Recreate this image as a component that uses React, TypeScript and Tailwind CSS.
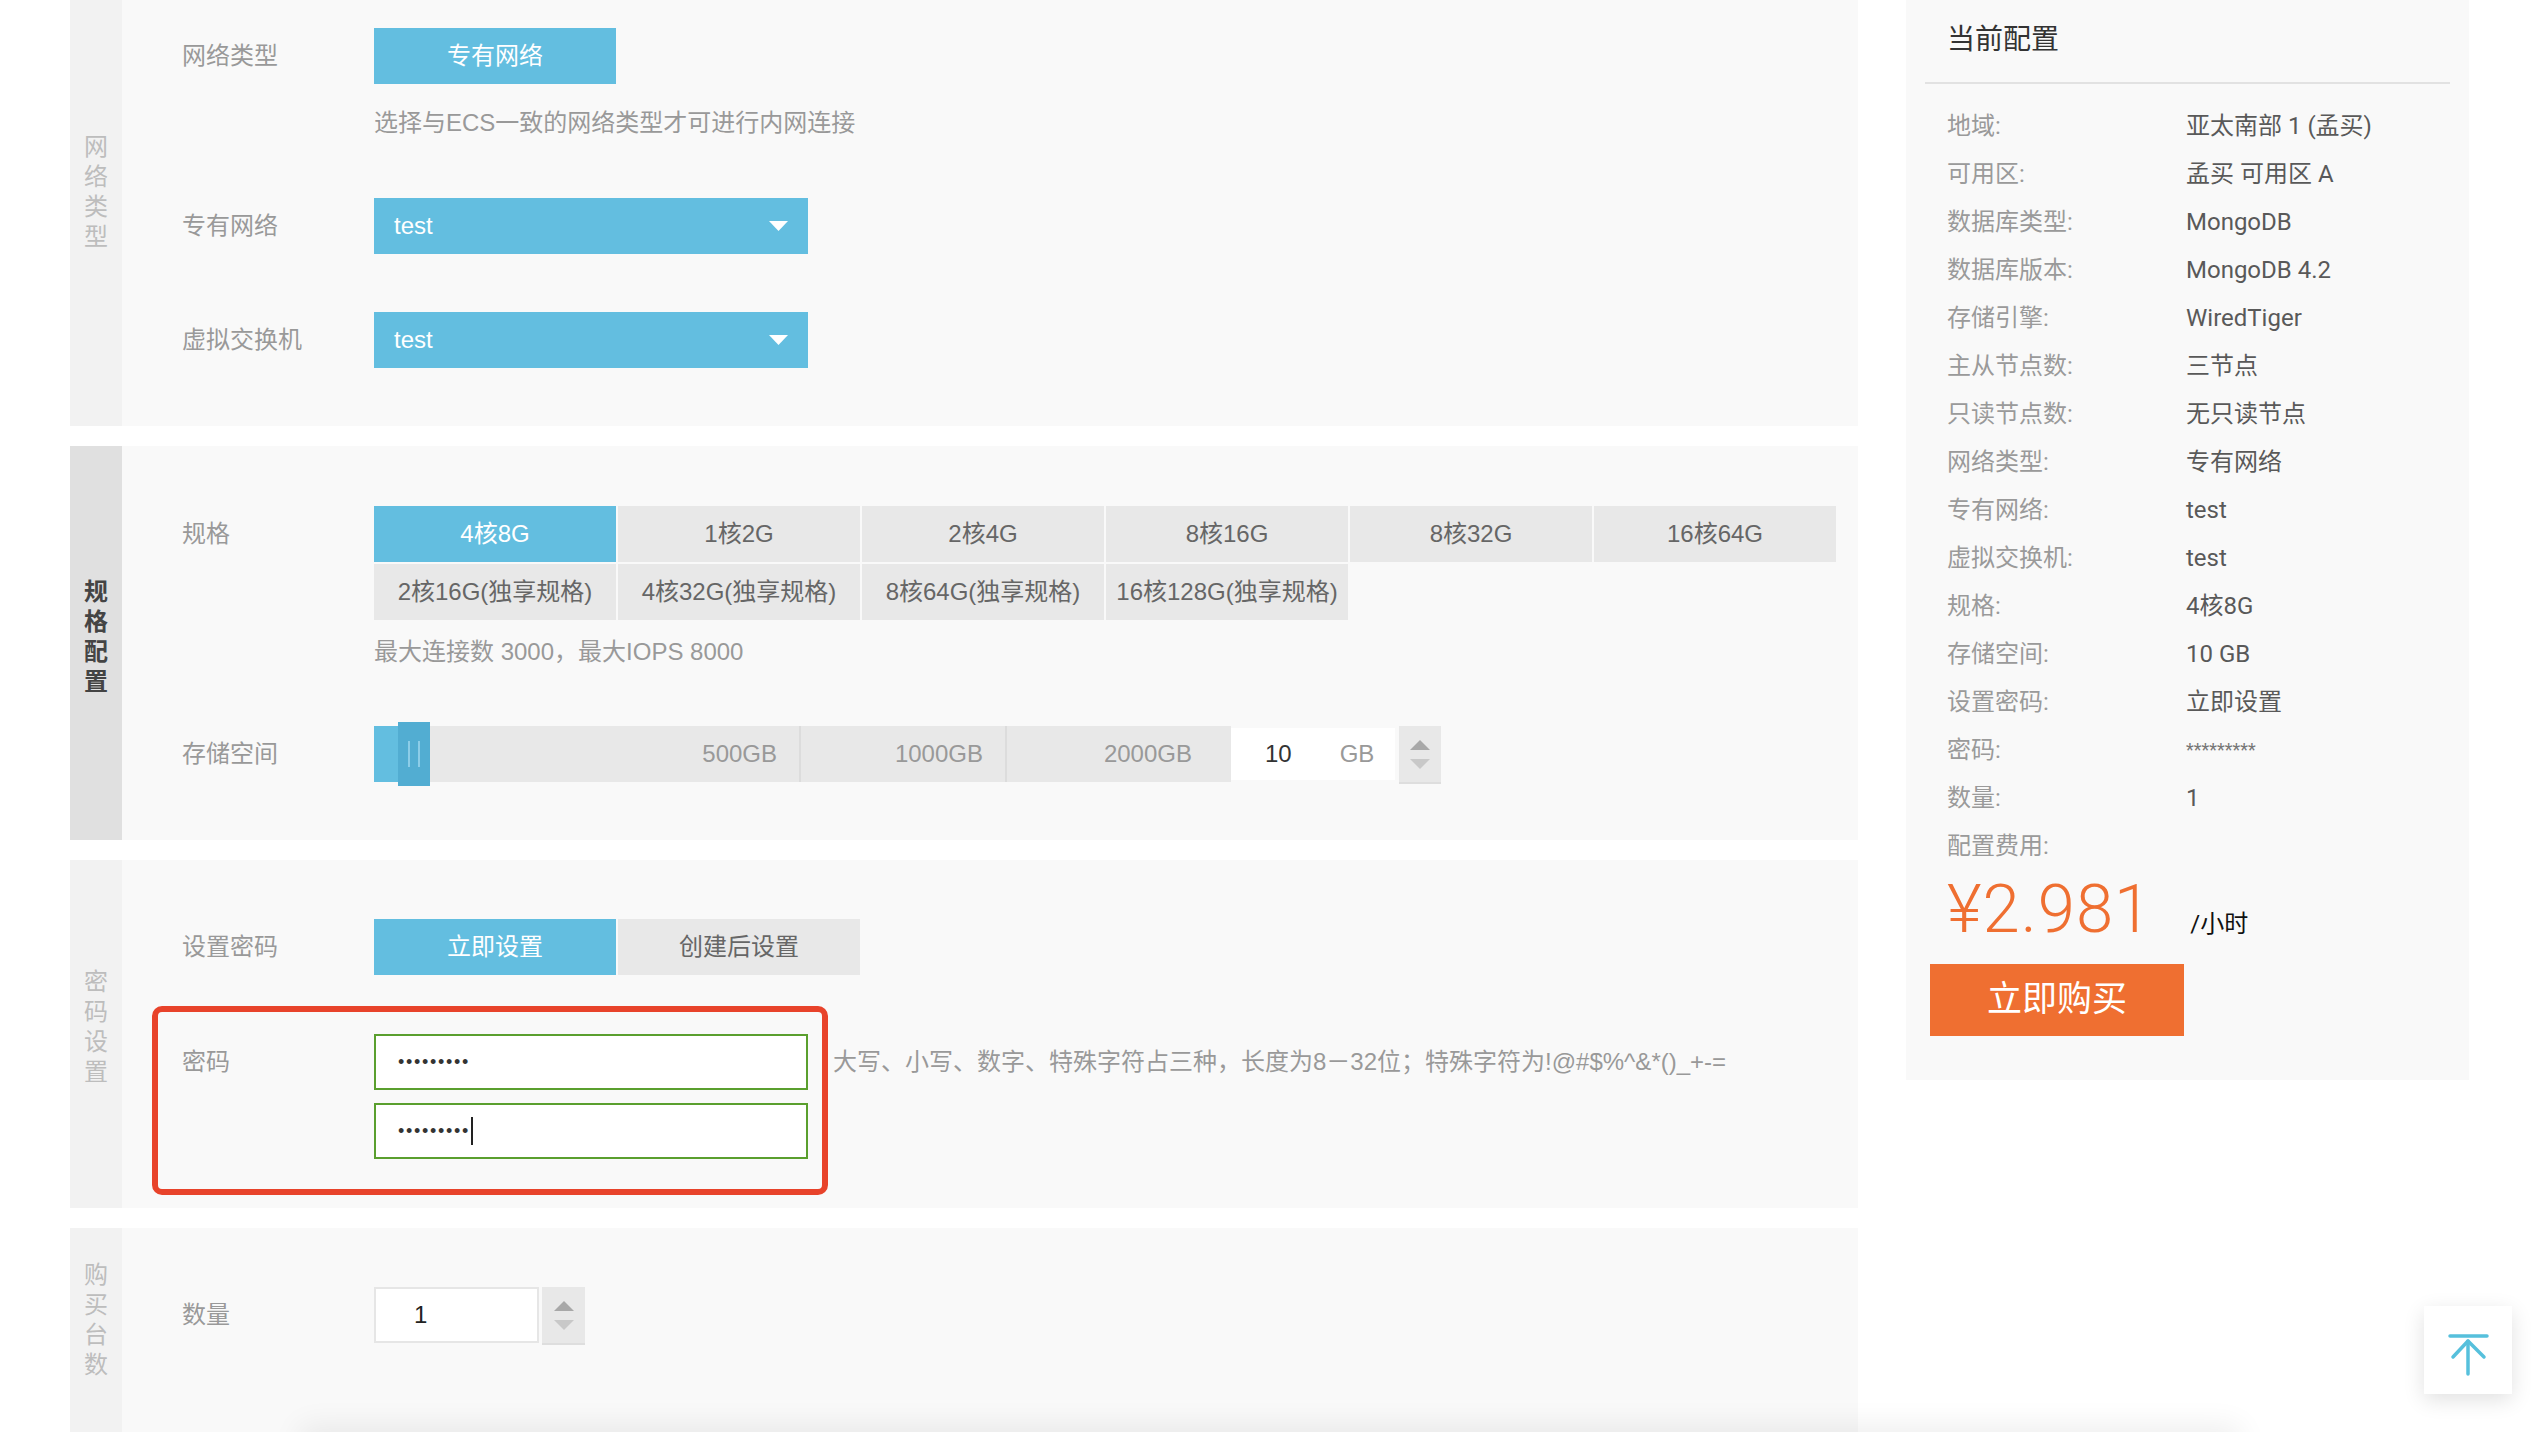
import React from "react";

const chars = (s: string) => s.split("");

function SideStrip({ text, active, cls }: { text: string; active?: boolean; cls: string }) {
  return (
    <div
      className={
        active
          ? `w-[52px] shrink-0 bg-[#e0e0e0] flex flex-col items-center text-[24px] leading-[30px] font-bold text-[#444] ${cls}`
          : `w-[52px] shrink-0 bg-[#f2f2f2] flex flex-col items-center text-[24px] leading-[30px] text-[#bdbdbd] ${cls}`
      }
    >
      {chars(text).map((c, i) => (
        <span key={i}>{c}</span>
      ))}
    </div>
  );
}

function Label({ children }: { children: React.ReactNode }) {
  return <div className="w-[192px] shrink-0 text-[24px] text-[#999]">{children}</div>;
}

function Select() {
  return (
    <div className="w-[434px] h-[56px] bg-[#63bee0] flex items-center justify-between pl-[20px] pr-[20px] text-white text-[24px]">
      <span>test</span>
      <svg width="19" height="10" viewBox="0 0 19 10">
        <path d="M0 0H19L9.5 10Z" fill="#ffffff" />
      </svg>
    </div>
  );
}

function Spinner({ cls }: { cls: string }) {
  return (
    <div className={`bg-[#e8e8e8] border-b-2 border-[#dedede] flex flex-col items-center justify-center gap-[9px] ${cls}`}>
      <svg width="20" height="10" viewBox="0 0 20 10">
        <path d="M10 0L20 10H0Z" fill="#a8a8a8" />
      </svg>
      <svg width="20" height="10" viewBox="0 0 20 10">
        <path d="M0 0H20L10 10Z" fill="#c8c8c8" />
      </svg>
    </div>
  );
}

const specs1 = ["4核8G", "1核2G", "2核4G", "8核16G", "8核32G", "16核64G"];
const specs2 = ["2核16G(独享规格)", "4核32G(独享规格)", "8核64G(独享规格)", "16核128G(独享规格)"];

const summary: [string, string][] = [
  ["地域:", "亚太南部 1 (孟买)"],
  ["可用区:", "孟买 可用区 A"],
  ["数据库类型:", "MongoDB"],
  ["数据库版本:", "MongoDB 4.2"],
  ["存储引擎:", "WiredTiger"],
  ["主从节点数:", "三节点"],
  ["只读节点数:", "无只读节点"],
  ["网络类型:", "专有网络"],
  ["专有网络:", "test"],
  ["虚拟交换机:", "test"],
  ["规格:", "4核8G"],
  ["存储空间:", "10 GB"],
  ["设置密码:", "立即设置"],
  ["密码:", ""],
  ["数量:", "1"],
  ["配置费用:", ""],
];

export default function App() {
  return (
    <div className="relative w-[2540px] h-[1432px] overflow-hidden bg-white font-['Liberation_Sans','Noto_Sans_CJK_SC',sans-serif]">
      <div className="flex items-start pl-[70px] gap-[48px]">
        {/* main column */}
        <div className="w-[1788px] flex flex-col">
          {/* section 1 */}
          <section className="flex h-[426px]">
            <SideStrip text="网络类型" cls="pt-[132px]" />
            <div className="flex-1 bg-[#f9f9f9] pl-[60px] pt-[28px]">
              <div className="flex items-center h-[56px]">
                <Label>网络类型</Label>
                <div className="w-[242px] h-[56px] bg-[#63bee0] text-white text-[24px] flex items-center justify-center">
                  专有网络
                </div>
              </div>
              <div className="mt-[22px] pl-[192px] text-[24px] leading-[34px] text-[#999]">
                选择与ECS一致的网络类型才可进行内网连接
              </div>
              <div className="mt-[58px] flex items-center h-[56px]">
                <Label>专有网络</Label>
                <Select />
              </div>
              <div className="mt-[58px] flex items-center h-[56px]">
                <Label>虚拟交换机</Label>
                <Select />
              </div>
            </div>
          </section>

          {/* section 2 */}
          <section className="flex h-[394px] mt-[20px]">
            <SideStrip text="规格配置" active cls="pt-[131px]" />
            <div className="flex-1 bg-[#f9f9f9] pl-[60px] pt-[60px]">
              <div className="flex items-start">
                <div className="w-[192px] h-[56px] flex items-center text-[24px] text-[#999]">规格</div>
                <div className="grid grid-cols-[repeat(6,242px)] gap-[2px]">
                  {specs1.map((s, i) => (
                    <div
                      key={s}
                      className={
                        i === 0
                          ? "h-[56px] bg-[#63bee0] text-white text-[24px] flex items-center justify-center"
                          : "h-[56px] bg-[#e8e8e8] text-[#666] text-[24px] flex items-center justify-center"
                      }
                    >
                      {s}
                    </div>
                  ))}
                  {specs2.map((s) => (
                    <div
                      key={s}
                      className="h-[56px] bg-[#e8e8e8] text-[#666] text-[24px] flex items-center justify-center whitespace-nowrap"
                    >
                      {s}
                    </div>
                  ))}
                </div>
              </div>
              <div className="mt-[15px] pl-[192px] text-[24px] leading-[34px] text-[#999]">
                最大连接数 3000，最大IOPS 8000
              </div>
              <div className="mt-[57px] flex items-center h-[56px]">
                <Label>存储空间</Label>
                <div className="relative flex h-[56px] w-[857px] bg-[#e8e8e8] text-[24px] text-[#999]">
                  <div className="w-[427px] border-r-2 border-[#dcdcdc] flex items-center justify-end pr-[22px]">500GB</div>
                  <div className="w-[206px] border-r-2 border-[#dcdcdc] flex items-center justify-end pr-[22px]">1000GB</div>
                  <div className="flex-1 flex items-center justify-end pr-[39px]">2000GB</div>
                  <div className="absolute left-0 top-0 w-[24px] h-[56px] bg-[#63bee0]" />
                  <div className="absolute left-[24px] top-[-4px] w-[32px] h-[64px] bg-[#52add2] flex items-center justify-center gap-[8px]">
                    <div className="w-[2px] h-[26px] bg-[#8ccde8]" />
                    <div className="w-[2px] h-[26px] bg-[#8ccde8]" />
                  </div>
                </div>
                <div className="w-[164px] h-[52px] bg-white flex items-center text-[24px]">
                  <span className="ml-[34px] text-[#333]">10</span>
                  <span className="ml-[48px] text-[#999]">GB</span>
                </div>
                <Spinner cls="ml-[4px] w-[42px] h-[58px] mt-[2px]" />
              </div>
            </div>
          </section>

          {/* section 3 */}
          <section className="relative flex h-[348px] mt-[20px]">
            <SideStrip text="密码设置" cls="pt-[107px]" />
            <div className="flex-1 bg-[#f9f9f9] pl-[60px] pt-[59px]">
              <div className="flex items-center h-[56px]">
                <Label>设置密码</Label>
                <div className="w-[242px] h-[56px] bg-[#63bee0] text-white text-[24px] flex items-center justify-center">
                  立即设置
                </div>
                <div className="ml-[2px] w-[242px] h-[56px] bg-[#e8e8e8] text-[#666] text-[24px] flex items-center justify-center">
                  创建后设置
                </div>
              </div>
              <div className="mt-[59px] flex items-center h-[56px]">
                <Label>密码</Label>
                <div className="w-[434px] h-[56px] bg-white border-2 border-[#5a9f2e] flex items-center pl-[22px]">
                  <span className="text-[18px] leading-none tracking-[1.7px] text-[#333] font-['Liberation_Sans',sans-serif]">•••••••••</span>
                </div>
                <div className="ml-[25px] text-[24px] text-[#999] whitespace-nowrap">
                  大写、小写、数字、特殊字符占三种，长度为8－32位；特殊字符为!@#$%^&amp;*()_+-=
                </div>
              </div>
              <div className="mt-[13px] flex items-center h-[56px]">
                <div className="w-[192px] shrink-0" />
                <div className="w-[434px] h-[56px] bg-white border-2 border-[#5a9f2e] flex items-center pl-[22px]">
                  <span className="text-[18px] leading-none tracking-[1.7px] text-[#333] font-['Liberation_Sans',sans-serif]">•••••••••</span>
                  <span className="w-[2px] h-[28px] bg-[#222] ml-[1px]" />
                </div>
              </div>
            </div>
            <div className="absolute left-[82px] top-[146px] w-[676px] h-[189px] border-[6px] border-[#e8432b] rounded-[10px]" />
          </section>

          {/* section 4 */}
          <section className="flex h-[204px] mt-[20px]">
            <SideStrip text="购买台数" cls="pt-[32px]" />
            <div className="flex-1 bg-[#f9f9f9] pl-[60px] pt-[59px]">
              <div className="flex items-center h-[56px]">
                <Label>数量</Label>
                <div className="w-[165px] h-[56px] bg-white border-2 border-[#e6e6e6] flex items-center pl-[38px] text-[24px] text-[#222]">
                  1
                </div>
                <Spinner cls="ml-[3px] w-[43px] h-[58px] mt-[2px]" />
              </div>
            </div>
          </section>
        </div>

        {/* right summary panel */}
        <aside className="w-[563px] shrink-0 bg-[#f9f9f9] pb-[44px] font-['Roboto','Noto_Sans_CJK_SC',sans-serif]">
          <div className="pl-[41px] pt-[23px] text-[28px] leading-[34px] text-[#333]">当前配置</div>
          <div className="mx-[19px] mt-[25px] h-[2px] bg-[#e2e2e2]" />
          <div className="pt-[18px] pl-[41px]">
            {summary.map(([k, v]) => (
              <div key={k} className="h-[48px] flex items-center text-[24px]">
                <div className="w-[239px] text-[#9a9a9a]">{k}</div>
                {k === "密码:" ? (
                  <div className="text-[18px] text-[#777] self-start mt-[10px]">*********</div>
                ) : (
                  <div className="text-[#595959]">{v}</div>
                )}
              </div>
            ))}
          </div>
          <div className="mt-[6px] pl-[41px] flex items-baseline">
            <span className="text-[67px] leading-[67px] font-light tracking-[1px] text-[#ef6f31]">¥2.981</span>
            <span className="ml-[38px] text-[24px] text-[#111]">/小时</span>
          </div>
          <button className="mt-[21px] ml-[24px] w-[254px] h-[72px] bg-[#ef6f31] text-white text-[35px] flex items-center justify-center">
            立即购买
          </button>
        </aside>
      </div>

      {/* faint footer shadow */}
      <div className="absolute left-[300px] right-[300px] top-[1432px] h-[40px] shadow-[0_-6px_30px_rgba(0,0,0,0.07)]" />

      {/* back to top */}
      <div className="absolute left-[2424px] top-[1306px] w-[88px] h-[88px] bg-white shadow-[0_6px_20px_rgba(0,0,0,0.12)] flex items-center justify-center">
        <svg width="88" height="88" viewBox="0 0 88 88" fill="none" stroke="#56c0dc" strokeWidth="3.5" strokeLinecap="round" strokeLinejoin="round">
          <path d="M26 30H63" />
          <path d="M44 35V68" />
          <path d="M29 51L44 35L60 51" />
        </svg>
      </div>
    </div>
  );
}
